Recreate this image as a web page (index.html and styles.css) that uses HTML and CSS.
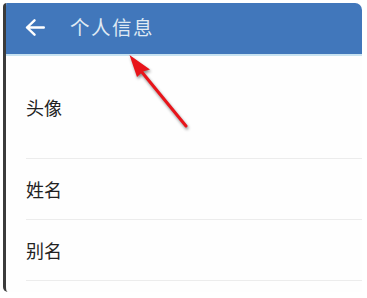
FILE: index.html
```html
<!DOCTYPE html>
<html lang="zh">
<head>
<meta charset="utf-8">
<link rel="stylesheet" href="styles.css">
</head>
<body>
<div class="phone">
  <header class="bar">
    <svg class="back" viewBox="0 0 20 17" width="20" height="17">
      <path d="M18.8 8.5H2M9.5 1.3 2 8.5l7.5 7.2" fill="none" stroke="#ffffff" stroke-width="2.4" stroke-linecap="round" stroke-linejoin="round"/>
    </svg>
    <span class="title">个人信息</span>
  </header>
  <ul class="list">
    <li class="row tall">头像</li>
    <li class="row">姓名</li>
    <li class="row">别名</li>
  </ul>
</div>
<svg class="pointer" width="367" height="298" viewBox="0 0 367 298">
  <line x1="186" y1="126" x2="141" y2="71" stroke="#e8141a" stroke-width="3" stroke-linecap="round"/>
  <polygon points="129.5,55 150,69.5 143,71.5 137,77" fill="#e8141a"/>
</svg>
</body>
</html>
```
FILE: styles.css
```css
html, body {
  margin: 0;
  padding: 0;
  background: #ffffff;
  font-family: "Noto Sans CJK SC", "Noto Sans", sans-serif;
}
body {
  width: 367px;
  height: 298px;
  overflow: hidden;
  position: relative;
}
.phone {
  margin: 3px 0 0 3px;
  width: 356px;
  height: 289px;
  border-left: 3px solid #3b3b3b;
  border-radius: 4px 7px 0 5px;
  overflow: hidden;
  background: #fefefe;
}
.bar {
  height: 51px;
  background: #4177bb;
  border-bottom: 2px solid #c8e3f1;
  display: flex;
  align-items: center;
  padding-left: 19px;
  gap: 25px;
}
.back {
  display: block;
  margin-top: -3px;
}
.title {
  color: #dfe9f3;
  font-size: 19.5px;
  letter-spacing: 1.5px;
  margin-top: -5px;
}
.list {
  list-style: none;
  margin: 0;
  padding: 0 0 0 20px;
}
.row {
  height: 60px;
  border-bottom: 1px solid #ececec;
  display: flex;
  align-items: center;
  font-size: 18px;
  color: #222222;
}
.row.tall {
  height: 102px;
}
.pointer {
  position: absolute;
  left: 0;
  top: 0;
  filter: drop-shadow(1px 2px 1.5px rgba(0,0,0,0.45));
  pointer-events: none;
}
```
